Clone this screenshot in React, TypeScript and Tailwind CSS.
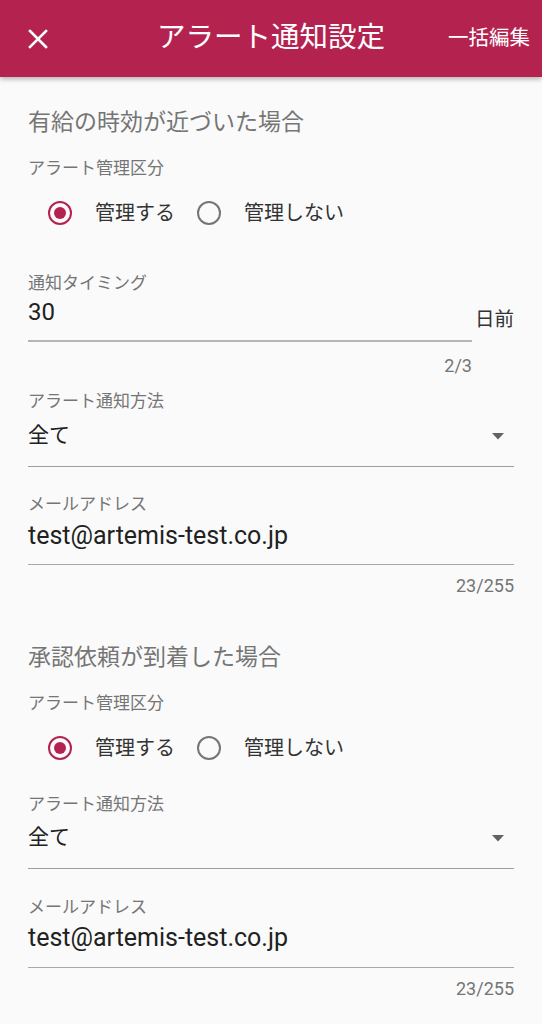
import React from "react";

const font = { fontFamily: 'Roboto, "Noto Sans CJK JP", sans-serif' };

function Radio({ checked }: { checked: boolean }) {
  return (
    <span
      className={
        "flex h-[24px] w-[24px] items-center justify-center rounded-full border-2 " +
        (checked ? "border-[#b42350]" : "border-[#757575]")
      }
    >
      {checked && <span className="h-[12px] w-[12px] rounded-full bg-[#b42350]" />}
    </span>
  );
}

function RadioRow({ mt }: { mt: string }) {
  return (
    <div className={"flex h-[40px] items-center pl-[20px] text-[20px] text-[#333333] " + mt}>
      <Radio checked />
      <span className="ml-[23px]">管理する</span>
      <span className="ml-[22px]">
        <Radio checked={false} />
      </span>
      <span className="ml-[23px]">管理しない</span>
    </div>
  );
}

function Label({ text, mt }: { text: string; mt: string }) {
  return <div className={"h-[24px] text-[17px] leading-[24px] text-[#757575] " + mt}>{text}</div>;
}

function SelectField({ mt }: { mt: string }) {
  return (
    <div className={"border-b border-[#9e9e9e] pb-[12px] " + mt}>
      <div className="flex h-[36px] items-center justify-between pr-[10px]">
        <span className="text-[21px] text-[#212121]">全て</span>
        <svg width="12" height="7" viewBox="0 0 12 7">
          <polygon points="0,0 12,0 6,6.5" fill="#616161" />
        </svg>
      </div>
    </div>
  );
}

function EmailField({ mt, pb }: { mt: string; pb: string }) {
  return (
    <div className={"border-b-[1.5px] border-[#a8a8a8] " + mt + " " + pb}>
      <div className="h-[30px] text-[25px] leading-[30px] text-[#212121]">test@artemis-test.co.jp</div>
    </div>
  );
}

function Counter({ text, mt }: { text: string; mt: string }) {
  return <div className={"h-[20px] text-right text-[18px] leading-[20px] text-[#757575] " + mt}>{text}</div>;
}

export default function App() {
  return (
    <div className="min-h-[1024px] w-full bg-[#fafafa]" style={font}>
      <header className="relative z-10 grid h-[77px] grid-cols-[1fr_auto_1fr] items-center bg-[#b42350] text-white shadow-[0_2px_5px_rgba(0,0,0,0.3)]">
        <div className="pl-[28px]">
          <svg width="20" height="20" viewBox="0 0 20 20" className="mt-[1px]">
            <path d="M2 2 L18 18 M18 2 L2 18" stroke="white" strokeWidth="2.6" strokeLinecap="square" />
          </svg>
        </div>
        <h1 className="text-[28.5px] font-normal">アラート通知設定</h1>
        <div className="pr-[12px] text-right text-[20.5px]">一括編集</div>
      </header>

      <main className="px-[28px] pt-[28px]">
        <div className="h-[36px] text-[23px] leading-[36px] text-[#757575]">有給の時効が近づいた場合</div>
        <Label text="アラート管理区分" mt="mt-[15px]" />
        <RadioRow mt="mt-[13px]" />

        <div className="mt-[38px] flex items-start">
          <div className="w-[444px]">
            <div className="h-[24px] text-[17px] leading-[24px] text-[#757575]">通知タイミング</div>
            <div className="mt-[3px] border-b-[2.5px] border-[#b5b5b5] pb-[14px]">
              <div className="h-[28px] text-[24px] leading-[28px] text-[#212121]">30</div>
            </div>
            <Counter text="2/3" mt="mt-[14px]" />
          </div>
          <div className="ml-auto mt-[37px] text-[19.5px] leading-[24px] text-[#333333]">日前</div>
        </div>

        <Label text="アラート通知方法" mt="mt-[13px]" />
        <SelectField mt="mt-[5px]" />

        <Label text="メールアドレス" mt="mt-[25px]" />
        <EmailField mt="mt-[5px]" pb="pb-[13px]" />
        <Counter text="23/255" mt="mt-[11px]" />

        <div className="mt-[44px] h-[36px] text-[23px] leading-[36px] text-[#757575]">承認依頼が到着した場合</div>
        <Label text="アラート管理区分" mt="mt-[15px]" />
        <RadioRow mt="mt-[13px]" />

        <Label text="アラート通知方法" mt="mt-[24px]" />
        <SelectField mt="mt-[4px]" />

        <Label text="メールアドレス" mt="mt-[26px]" />
        <EmailField mt="mt-[4px]" pb="pb-[14px]" />
        <Counter text="23/255" mt="mt-[11px]" />
      </main>
    </div>
  );
}
